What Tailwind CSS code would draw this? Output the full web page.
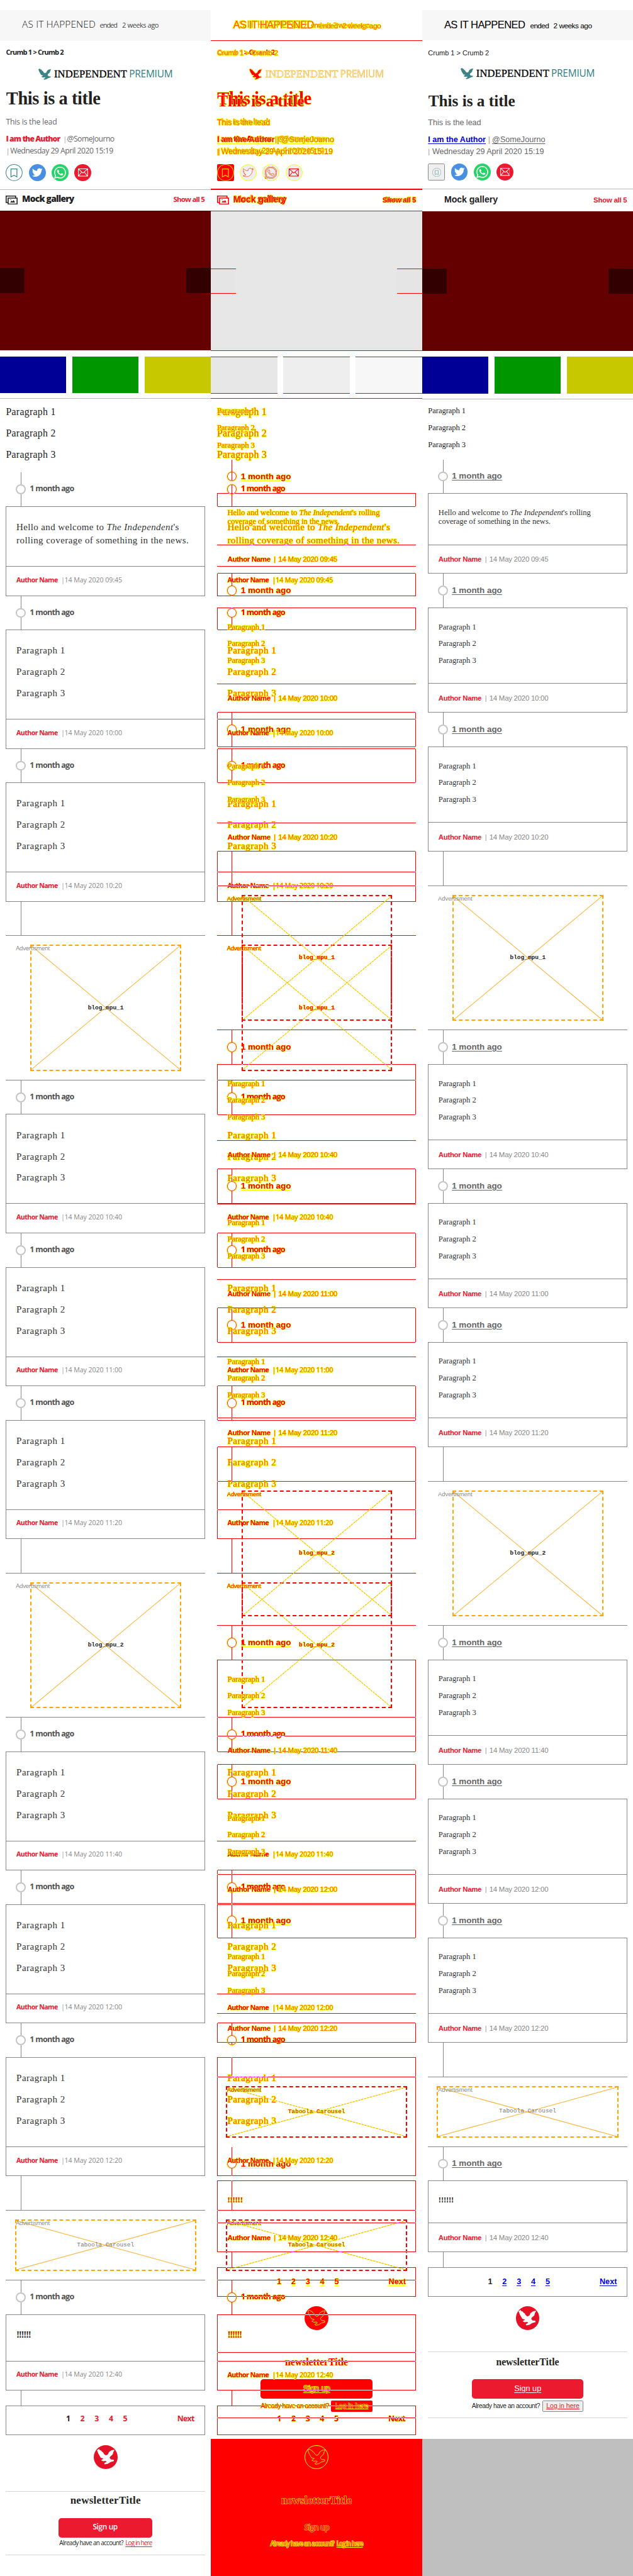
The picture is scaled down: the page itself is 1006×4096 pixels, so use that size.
<!DOCTYPE html>
<html lang="en">
<head>
<meta charset="utf-8">
<title>Live blog comparison</title>
<script src="https://cdn.jsdelivr.net/npm/@tailwindcss/browser@4"></script>
</head>
<body class="bg-white">
<div class="h-[4096px] w-[1006px] overflow-hidden">
  <main id="sheet" class="grid h-[5191px] w-[1275px] grid-cols-3 overflow-hidden bg-white [zoom:0.7892]">
    <section id="before" class="overflow-hidden bg-white"></section>
    <section id="delta" class="isolate grid overflow-hidden bg-white"></section>
    <section id="after" class="overflow-hidden bg-white"></section>
  </main>
</div>
<script>
// Distance of the baseline below the middle of the line, per font family, in em.
const BASE = { sans: 0.388, arial: 0.3465, serif: 0.3375, mono: 0.2665 };
const FAMILY = {
  sans: "font-['Open_Sans',sans-serif]",
  arial: "font-['Liberation_Sans',sans-serif]",
  serif: "font-['Liberation_Serif',serif]",
  mono: "font-['Liberation_Mono',monospace]"
};
const FACE = { sans: '"Open Sans"', arial: '"Liberation Sans"', serif: '"Liberation Serif"', mono: '"Liberation Mono"' };
// Changed glyphs: heavy ones keep a red core, thin ones are mostly their yellow rim.
const MARK = 'text-[#ff0000] [-webkit-text-stroke:1.4px_#ffff00] [paint-order:stroke_fill]';
const MARK_THIN = 'text-[#ff5500] [-webkit-text-stroke:2px_#ffff00] [paint-order:stroke_fill]';
const markFor = font => /font-(extra|semi)?bold/.test(font) ? MARK : MARK_THIN;

const EAGLE = 'M0 1.5 3 0l1.5 2L6 2l1.2 2L9 5l1.5 2.5L13 9.5 16 8l1.5-3.5L21 2l5-1-2 3.5-1 3.5-3.5 3L18.500 13l2 2.500 4 .2 .5 2-5 1.500-4 2.500-4.500.8-1-1.500L14 19l-1-1.500-4 .5-3-1.500 3.500-2.500-4-1L3.500 9.500 2 7z';
const TWITTER = 'M23.953 4.57a10 10 0 01-2.825.775 4.958 4.958 0 002.163-2.723c-.951.555-2.005.959-3.127 1.184a4.92 4.92 0 00-8.384 4.482C7.69 8.095 4.067 6.13 1.64 3.162a4.822 4.822 0 00-.666 2.475c0 1.71.87 3.213 2.188 4.096a4.904 4.904 0 01-2.228-.616v.06a4.923 4.923 0 003.946 4.827 4.996 4.996 0 01-2.212.085 4.936 4.936 0 004.604 3.417 9.867 9.867 0 01-6.102 2.105c-.39 0-.779-.023-1.17-.067a13.995 13.995 0 007.557 2.209c9.053 0 13.998-7.496 13.998-13.985 0-.21 0-.42-.015-.63A9.935 9.935 0 0024 4.59z';
const WHATSAPP = 'M17.472 14.382c-.297-.149-1.758-.867-2.03-.967-.273-.099-.471-.148-.67.15-.197.297-.767.966-.94 1.164-.173.199-.347.223-.644.075-.297-.15-1.255-.463-2.39-1.475-.883-.788-1.48-1.761-1.653-2.059-.173-.297-.018-.458.13-.606.134-.133.298-.347.446-.52.149-.174.198-.298.298-.497.099-.198.05-.371-.025-.52-.075-.149-.669-1.612-.916-2.207-.242-.579-.487-.5-.669-.51-.173-.008-.371-.01-.57-.01-.198 0-.52.074-.792.372-.272.297-1.04 1.016-1.04 2.479 0 1.462 1.065 2.875 1.213 3.074.149.198 2.096 3.2 5.077 4.487.709.306 1.262.489 1.694.625.712.227 1.36.195 1.871.118.571-.085 1.758-.719 2.006-1.413.248-.694.248-1.289.173-1.413-.074-.124-.272-.198-.57-.347m-5.421 7.403h-.004a9.87 9.87 0 01-5.031-1.378l-.361-.214-3.741.982.998-3.648-.235-.374a9.86 9.86 0 01-1.51-5.26c.001-5.45 4.436-9.884 9.888-9.884 2.64 0 5.122 1.03 6.988 2.898a9.825 9.825 0 012.893 6.994c-.003 5.45-4.437 9.884-9.885 9.884m8.413-18.297A11.815 11.815 0 0012.05 0C5.495 0 .16 5.335.157 11.892c0 2.096.547 4.142 1.588 5.945L.057 24l6.305-1.654a11.882 11.882 0 005.683 1.448h.005c6.554 0 11.89-5.335 11.893-11.893a11.821 11.821 0 00-3.48-8.413z';

const sizeOf = cls => parseFloat(cls.match(/text-\[([\d.]+)px\]/)[1]);

// Tracking that makes a label fill the given width.
const pen = document.createElement('canvas').getContext('2d');
function tracking(text, width, fam, font) {
  const plain = text.replace(/<[^>]+>/g, '').replace('&gt;', '>');
  if (plain.length < 2) return '0px';
  const weight = font.includes('font-extrabold') ? 800 : font.includes('font-bold') ? 700 : font.includes('font-semibold') ? 600 : font.includes('font-light') ? 300 : 400;
  pen.font = `${weight} ${sizeOf(font) * 10}px ${FACE[fam]}`;
  return ((width - pen.measureText(plain).width / 10) / (plain.length - 1)).toFixed(3) + 'px';
}
const fit = (text, width, fam, font) => `<span style="letter-spacing:${tracking(text, width, fam, font)}">${text}</span>`;

// A vertical stack whose children are given by their top edge or baseline.
class Flow {
  constructor(diff, origin = 0) { this.diff = diff; this.y = origin; this.html = ''; }
  block(top, height, cls, inner = '') {
    this.html += `<div class="shrink-0 ${cls}" style="margin-top:${(top - this.y).toFixed(2)}px;height:${height}px">${inner}</div>`;
    this.y = top + height;
  }
  // items: [text, x, w, family, font classes, colour classes]
  row(baseline, left, items) {
    let lead = items[0];
    items.forEach(i => { if (sizeOf(i[4]) > sizeOf(lead[4])) lead = i; });
    const top = baseline - 12 - BASE[lead[3]] * sizeOf(lead[4]);
    let x = left, out = '';
    for (const [text, ix, w, fam, font, colour] of items) {
      out += `<span class="inline-block shrink-0 ${FAMILY[fam]} ${font} ${this.diff ? markFor(font) : colour}" style="margin-left:${(ix - x).toFixed(1)}px;width:${w}px;letter-spacing:${tracking(text, w, fam, font)}">${text}</span>`;
      x = ix + w;
    }
    this.block(top, 24, 'flex items-baseline whitespace-nowrap leading-[24px]', out);
  }
  rule(y, plain, x = 12, w = 401) {
    this.block(y, 1, 'flex', `<div class="border-t ${this.diff ? 'border-[#00ffff] mix-blend-difference' : plain}" style="margin-left:${x}px;width:${w}px"></div>`);
  }
}

const disc = (diff, bg, glyph) => `<div class="flex size-[34px] items-center justify-center rounded-full ${diff ? 'border border-[#ffff00] bg-[#eeeeee]' : bg}">${glyph}</div>`;
const glyph = (diff, size, d) => `<svg viewBox="0 0 24 24" width="${size}" height="${size}" ${diff ? 'fill="#f4f4f4" stroke="#ff3300" stroke-width="1"' : 'fill="#fff"'}><path d="${d}"/></svg>`;
const mail = diff => `<svg viewBox="0 0 20 16" width="20" height="16" fill="none" stroke="${diff ? '#ff0000' : '#fff'}" stroke-width="1.300"><path d="M.7.7h18.600v14.600H.7zM1 1l9 8 9-8M1 15l6.500-8M19 15l-6.500-8"/></svg>`;
const bookmark = (size, c) => `<svg viewBox="0 0 34 34" width="${size}" height="${size}" fill="none" stroke="${c}" stroke-width="1.300"><circle cx="17" cy="17" r="16.300"/><path d="M10.700 9.700h12v16l-6-3.200-6 3.200z" stroke-width="1.600"/></svg>`;

function header(f, after) {
  const d = f.diff, ink = 'text-[#222222]', grey = 'text-[#666666]', red = 'text-[#ec1a2e]';
  const u = after ? ' underline underline-offset-2' : '';
  const bar = new Flow(d, 20);
  if (after) bar.row(58, 0, [
    ['AS IT HAPPENED', 44.5, 164, 'arial', 'text-[21px]', 'text-black'],
    ['ended', 217.5, 38.5, 'arial', 'text-[15px]', 'text-black'],
    ['2 weeks ago', 264.5, 78, 'arial', 'text-[15px]', 'text-black']]);
  else bar.row(57, 0, [
    ['AS IT HAPPENED', 44.5, 148, 'sans', 'text-[19.5px] font-light', ink],
    ['ended', 201, 36, 'sans', 'text-[14px]', 'text-[#444444]'],
    ['2 weeks ago', 246, 74, 'sans', 'text-[14px]', 'text-[#444444]']]);
  const o = after ? -1 : 0;
  f.block(20, 62 + o, d ? 'flex flex-col border-b ' + (after ? 'border-transparent' : 'border-[#ff0000]') : 'flex flex-col bg-[#f7f7f7]', bar.html);
  f.row(after ? 112 : 111, 0, [['Crumb 1 &gt; Crumb 2', 12, after ? 123 : 117, after ? 'arial' : 'sans', after ? 'text-[14px]' : 'text-[14px] font-bold', ink]]);
  if (!d || !after) {
    f.block(138 + o, 25, 'flex items-center whitespace-nowrap pl-[77px] leading-[24px]',
      `<svg viewBox="0 0 26 24" width="26" height="24" fill="${d ? '#ff0000' : '#3d8487'}" stroke="${d ? '#ffff00' : 'none'}"><path d="${EAGLE}"/></svg>
       <span class="ml-[6px] w-[148px] shrink-0 text-[21px] font-['Liberation_Serif',serif] ${d ? 'text-[#eeeeee] [-webkit-text-stroke:0.6px_#ffaa00]' : 'text-black [-webkit-text-stroke:0.4px_#000]'}">${fit('INDEPENDENT', 147, 'serif', 'text-[21px]')}</span>
       <span class="ml-[3px] w-[88px] shrink-0 text-[19.5px] font-['Open_Sans',sans-serif] ${d ? 'text-[#eeeeee] [-webkit-text-stroke:0.6px_#ffaa00]' : 'text-[#2d7d80]'}">${fit('PREMIUM', 88, 'sans', 'text-[19.5px]')}</span>`);
  }
  if (after) f.row(214, 0, [['This is a title', 12.5, 175, 'serif', 'text-[32px] font-bold', ink]]);
  else f.row(212, 0, [['This is a title', 12.5, 190, 'serif', 'text-[36px] font-bold', ink]]);
  const fam = after ? 'arial' : 'sans', sz = after ? 'text-[16px]' : 'text-[15.5px]';
  f.row(after ? 253 : 252, 0, [['This is the lead', 12, after ? 107 : 103, fam, sz, grey]]);
  if (after) f.row(287, 0, [
    ['I am the Author', 12, 117, fam, 'text-[16px] font-bold' + u, 'text-[#0000ee]'],
    ['|', 133, 4, fam, 'text-[16px]', 'text-[#999999]'],
    ['@SomeJourno', 141, 107, fam, 'text-[16px]' + u, grey]]);
  else f.row(287, 0, [
    ['I am the Author', 12, 110, fam, 'text-[15.5px] font-extrabold', red],
    ['|', 127, 4, fam, 'text-[14px]', 'text-[#aaaaaa]'],
    ['@SomeJourno', 135, 96, fam, 'text-[15.5px]', grey]]);
  f.row(311, 0, [['|', 12, 4, fam, 'text-[14px]', 'text-[#999999]'],
    ['Wednesday 29 April 2020 15:19', 20.5, after ? 226 : 208, fam, sz, grey]]);
  const first = d
    ? (after ? '<div class="size-[34px]"></div>' : `<div class="size-[34px] rounded-[3px] bg-[#ff0000]">${bookmark(34, '#ffcc00')}</div>`)
    : after ? `<div class="flex size-[34px] items-center justify-center rounded-[3px] border border-[#888888] bg-[#efefef]">${bookmark(18, '#5f9ea0')}</div>` : bookmark(34, '#3d8487');
  f.block(331 + o, 34, 'flex gap-[12px] pl-[12px]', (d && after) ? '' :
    first + disc(d, 'bg-[#4a90e2]', glyph(d, 21, TWITTER)) + disc(d, 'bg-[#25d366]', glyph(d, 24, WHATSAPP)) + disc(d, 'bg-[#ec1a2e]', mail(d)));
  f.rule(381 + o, 'border-[#bbbbbb]', 0, 425);
  const stack = after ? '' : `<svg viewBox="0 0 24 18" width="24" height="18" fill="none" stroke="${d ? '#ff0000' : '#222'}" stroke-width="2"><path d="M4 14H1V1h19v3M5 5h18v12H5z"/><path d="m9 14 3-4 2 2 2-3 3 5zM9.500 7.500h1.500v1.500H9.500z" fill="${d ? '#ff0000' : '#222'}" stroke="none"/></svg>`;
  f.block(394, 18, 'pl-[12px]', stack);
  f.row(after ? 409 : 407.5, 0, [
    ['Mock gallery', 44.5, after ? 108 : 105.5, fam, after ? 'text-[18px] font-bold' : 'text-[17.5px] font-extrabold', ink],
    ['Show all 5', after ? 345 : 349, after ? 68 : 64, fam, 'text-[14.5px] font-bold', red]]);
  if (!d) {
    f.block(425 - o, 281, 'flex items-center justify-between bg-[#640000]', '<div class="h-[50px] w-[50px] bg-[#320000]"></div><div class="h-[50px] w-[50px] bg-[#320000]"></div>');
    f.block(718 - o, 74.5, 'grid grid-cols-3 gap-[12px]', '<div class="bg-[#000096]"></div><div class="bg-[#009600]"></div><div class="bg-[#c8c800]"></div>');
    f.rule(802 - o, 'border-[#bbbbbb]', 0, 425);
  }
}

function lead(f, top, label, after, height = 68) {
  const ln = f.diff ? 'border-[#00ffff] mix-blend-difference' : 'border-[#888888]';
  const seg = h => `<div class="ml-[41.5px] w-0 border-l ${ln}" style="height:${h}px"></div>`;
  if (!label) { f.block(top, height, 'flex flex-col', seg(height)); return; }
  const g = new Flow(f.diff, 0);
  g.block(0, 24, 'flex flex-col', seg(24));
  g.block(24, 20, 'flex pl-[32px]', `<div class="size-[20px] rounded-full ${f.diff ? 'border-[2px] border-[#ff0000] outline outline-[#ffff00]' : 'border-[2.6px] border-[#c4c4c4]'}"></div>`);
  g.row(after ? 40.5 : 40, 0, [after
    ? ['1 month ago', 60, 101, 'arial', 'text-[17px] font-bold underline underline-offset-2', 'text-[#666666]']
    : ['1 month ago', 60, 90, 'sans', 'text-[16px] font-bold', 'text-[#555555]']]);
  g.block(44, 24, 'flex flex-col', seg(24));
  f.block(top, 68, 'flex flex-col', g.html);
}

function card(f, top, h, foot, texts, stamp, after) {
  const g = new Flow(f.diff, 0);
  for (const [b, items] of texts) g.row(b, 0, items);
  const fam = after ? 'arial' : 'sans';
  g.rule(h - foot, 'border-[#888888]', 0, 401);
  g.row(h - foot + (after ? 35.5 : 33.5), 0, [
    ['Author Name', 21, after ? 87 : 84, fam, after ? 'text-[14.5px] font-bold' : 'text-[13.5px] font-bold', 'text-[#ec1a2e]'],
    ['|', after ? 114.5 : 111, 4, fam, 'text-[14px]', 'text-[#999999]'],
    [stamp, after ? 123.5 : 118, after ? 119 : 116, fam, after ? 'text-[14.5px]' : 'text-[13.5px]', 'text-[#888888]']]);
  f.block(top, h, 'relative mx-[12px] flex flex-col', g.html +
    `<div class="absolute inset-0 border ${f.diff ? 'border-[#00ffff] mix-blend-difference' : 'border-[#888888]'}"></div>`);
}

function ad(f, top, kind, after) {
  const wide = kind === 'Taboola Carousel', h = wide ? 142 : 292;
  const w = wide ? 365 : 304, bh = h - 38, d = f.diff;
  f.rule(top, 'border-[#888888]');
  f.block(top + 19, bh, 'relative flex pl-[30px]',
    `<div class="relative grid place-items-center border-[2.6px] border-dashed ${d ? 'border-[#ff0000]' : 'border-[#ffa500]'}" style="width:${w}px;margin-left:${wide ? 0 : 31}px">
      <svg class="absolute inset-0 h-full w-full" preserveAspectRatio="none" viewBox="0 0 100 100" fill="none"><path d="M0 0 100 100M100 0 0 100" stroke="${d ? '#ffee00' : '#ffb02e'}" stroke-width="1.300" vector-effect="non-scaling-stroke"/>${d ? '<path d="M0 0 100 100M100 0 0 100" stroke="#ff5500" stroke-width="1" stroke-dasharray="2 4" vector-effect="non-scaling-stroke"/>' : ''}</svg>
      <span class="relative text-[12px] font-['Liberation_Mono',monospace] ${wide ? '' : 'font-bold'} ${d ? MARK : wide ? 'text-[#777777]' : 'text-[#222222]'}">${kind}</span>
    </div>
    <span class="absolute top-0 left-[32px] text-[12px] leading-[16px] ${after ? FAMILY.arial : FAMILY.sans} ${d ? MARK : 'text-[#888888]'}">${fit('Advertisment', 69, after ? 'arial' : 'sans', 'text-[12px]')}</span>`);
  f.rule(top + h - 1, 'border-[#888888]');
}

function pager(f, top, h, after) {
  const g = new Flow(f.diff, 0), link = after ? 'text-[#0000ee]' : 'text-[#ec1a2e]';
  const font = after ? 'text-[16px] font-bold' : 'text-[15.5px] font-bold', u = after ? ' underline underline-offset-2' : '';
  const fam = after ? 'arial' : 'sans', x0 = after ? 120.5 : 121;
  const items = [1, 2, 3, 4, 5].map((n, i) => [String(n), x0 + i * (after ? 29 : 28.7), 9, fam, font + (i ? u : ''), i ? link : 'text-[#222222]']);
  items.push(['Next', after ? 345.5 : 345, 35, fam, font + u, link]);
  g.row(after ? 35 : 34, 0, items);
  f.block(top, h, 'relative mx-[12px] flex flex-col', g.html +
    `<div class="absolute inset-0 border ${f.diff ? 'border-[#00ffff] mix-blend-difference' : 'border-[#888888]'}"></div>`);
}

function newsletter(f, top, after) {
  const d = f.diff, ink = 'text-[#222222]', y = top;
  const solid = !d ? 'bg-[#e31226]' : after ? 'bg-[#ff0000]' : 'border border-[#ffff00]';
  f.block(y, 48, 'flex justify-center', `<div class="flex size-[48px] items-center justify-center rounded-full ${solid}"><svg viewBox="0 0 26 24" width="36" height="33" fill="${d ? 'none' : '#fff'}" stroke="${d ? '#ffff00' : 'none'}" stroke-width=".8"><path d="${EAGLE}"/></svg></div>`);
  if (!d || after) f.rule(y + 92, 'border-[#d4d4d4]');
  f.row(y + (after ? 120.5 : 119), 0, [['newsletterTitle', after ? 149 : 141.5, after ? 127 : 142, 'serif', after ? 'text-[20px] font-bold' : 'text-[21.5px] font-bold', ink]]);
  const g = new Flow(d, 0);
  g.row(after ? 25 : 22.5, 0, [['Sign up', after ? 85.5 : 68.5, after ? 54.5 : 50.5, after ? 'arial' : 'sans', after ? 'text-[16px] underline underline-offset-2' : 'text-[15px] font-semibold', 'text-white']]);
  f.block(y + 147, 39.5, 'flex justify-center', `<div class="flex h-full flex-col rounded-[6px] ${!d ? 'bg-[#ec1a2e]' : after ? 'bg-[#ff0000]' : 'border border-[#ff0000]'}" style="width:${after ? 225 : 188.5}px">${g.html}</div>`);
  if (after) {
    f.block(y + 190.5, 22, 'flex items-center whitespace-nowrap pl-[100px] text-[13px] leading-[20px] font-[\'Liberation_Sans\',sans-serif]',
      `<span class="w-[138px] shrink-0 ${d ? MARK : ink}">${fit('Already have an account?', 138, 'arial', 'text-[13px]')}</span><span class="ml-[4px] flex h-full w-[83px] shrink-0 items-center justify-center rounded-[2px] border text-[13.5px] underline ${d ? 'border-[#ff0000] bg-[#ff0000] ' + MARK : 'border-[#888888] bg-[#efefef] text-[#ec1a2e]'}">${fit('Log in here', 67, 'arial', 'text-[13.5px]')}</span>`);
    f.rule(y + 225, 'border-[#d4d4d4]');
  } else {
    f.row(y + 202.5, 0, [['Already have an account?', 119.5, 129.5, 'sans', 'text-[12.5px]', ink],
      ['Log in here', 252.5, 54.5, 'sans', 'text-[12.5px] underline underline-offset-2', 'text-[#ec1a2e]']]);
    if (!d) f.rule(y + 221, 'border-[#d4d4d4]');
  }
}

const ENTRIES = ['09:45', '10:00', '10:20', 'blog_mpu_1', '10:40', '11:00', '11:20', 'blog_mpu_2', '11:40', '12:00', '12:20', 'Taboola Carousel', '12:40'];

function column(diff, after) {
  const f = new Flow(diff, 0), ink = 'text-[#222222]', body = 'text-[#333333]';
  header(f, after);
  const P = after ? { first: 834, step: 34.3, w: 76, font: 'text-[16px]', x: 12 } : { first: 837.5, step: 43, w: 100, font: 'text-[20px]', x: 12 };
  [1, 2, 3].forEach((n, i) => f.row(P.first + i * P.step, 0, [[`Paragraph ${n}`, P.x, P.w, 'serif', P.font, ink]]));
  const foot = after ? 59 : 60;
  let y = after ? 926 : 952;
  for (const e of ENTRIES) {
    const isAd = !e.includes(':');
    lead(f, y, !isAd, after);
    y += 68;
    if (isAd) { ad(f, y, e, after); y += e[0] === 'T' ? 142 : 292; continue; }
    let h, texts;
    if (e === '09:45') {
      h = after ? 162 : 181;
      texts = after
        ? [[45, [['Hello and welcome to <i>The Independent</i>\'s rolling', 21, 308, 'serif', 'text-[16px]', body]]],
           [63, [['coverage of something in the news.', 21, 226, 'serif', 'text-[16px]', body]]]]
        : [[48.5, [['Hello and welcome to <i>The Independent</i>\'s', 21, 328.5, 'serif', 'text-[19px]', body]]],
           [75.5, [['rolling coverage of something in the news.', 21, 347, 'serif', 'text-[19px]', body]]]];
    } else if (e === '12:40') {
      h = after ? 144 : 154;
      texts = [[after ? 45 : 48, [['!!!!!!', 21, after ? 31 : 30, 'serif', after ? 'text-[16px] font-bold' : 'text-[19px] font-bold', ink]]]];
    } else {
      h = after ? 212 : 240;
      texts = [1, 2, 3].map((n, i) => after
        ? [45 + 34 * i, [[`Paragraph ${n}`, 21, 76, 'serif', 'text-[16px]', body]]]
        : [49 + 43 * i, [[`Paragraph ${n}`, 21, 98, 'serif', 'text-[19px]', body]]]);
    }
    card(f, y, h, foot, texts, '14 May 2020 ' + e, after);
    y += h;
  }
  lead(f, y, false, after, after ? 31 : 30);
  y += after ? 31 : 30;
  pager(f, y, after ? 59 : 60, after);
  newsletter(f, after ? 4647 : 4927, after);
  if (after && !diff) f.block(4914, 277, 'bg-[#bfbfbf]');
  return f.html;
}

function backdrop() {
  const f = new Flow(true, 0);
  f.block(425, 282, 'flex items-center justify-between border-y border-[#ff0000] bg-[#e7e7e7]',
    '<div class="h-[51px] w-[50px] border-y border-[#ff0000] bg-[#e5e5e5]"></div><div class="h-[51px] w-[50px] border-y border-[#ff0000] bg-[#e5e5e5]"></div>');
  f.block(718, 75, 'grid grid-cols-3 gap-[12px]', '<div class="border-y border-[#ff0000] bg-[#e7e7e7]"></div><div class="border-y border-[#ff0000] bg-[#eeeeee]"></div><div class="border-y border-[#ff0000] bg-[#f7f7f7]"></div>');
  f.block(802, 2, 'bg-[#ff0000]');
  f.block(4914, 277, 'bg-[#ff0000]');
  return f.html;
}

const layer = html => `<div class="col-start-1 row-start-1 flex flex-col overflow-visible">${html}</div>`;
document.getElementById('before').innerHTML = layer(column(false, false));
document.getElementById('after').innerHTML = layer(column(false, true));
document.getElementById('delta').innerHTML = layer(backdrop()) + layer(column(true, false)) + layer(column(true, true));
</script>
</body>
</html>
